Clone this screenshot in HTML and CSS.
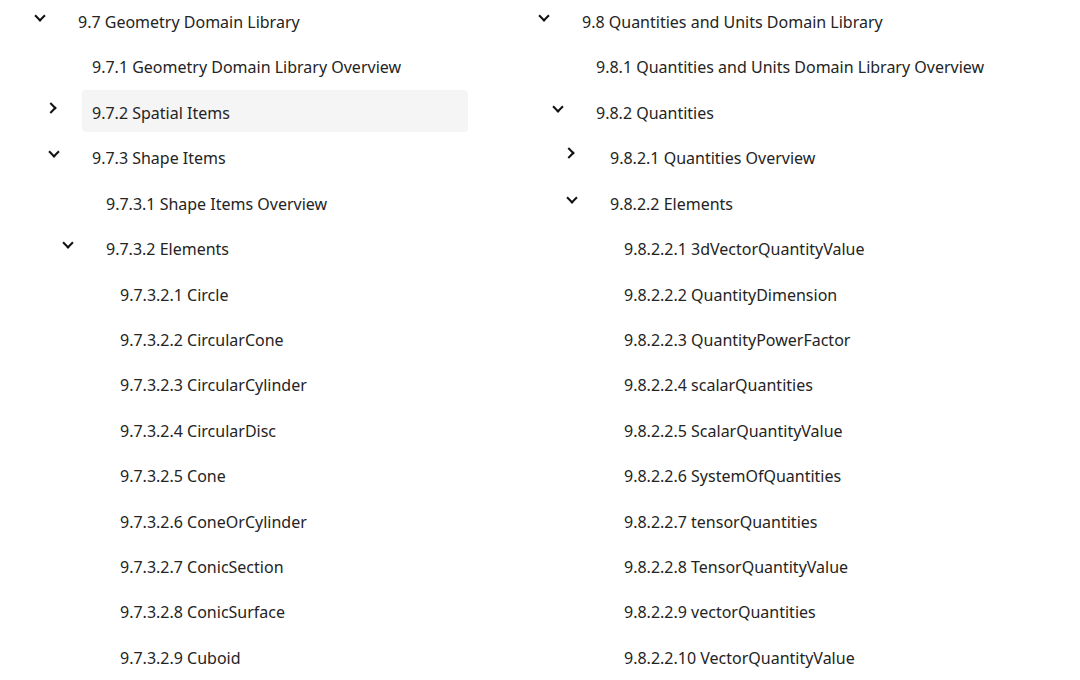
FILE: index.html
```html
<!DOCTYPE html>
<html lang="en">
<head>
    <meta charset="UTF-8">
    <meta name="viewport" content="width=device-width, initial-scale=1.0">
    <title>Table of Contents</title>
    <link rel="stylesheet" href="styles.css">
</head>
<body>
    <main class="toc">
        <ul class="tree">
            <li>
                <div class="row"><span class="toggle open"></span><a class="label" href="#">9.7 Geometry Domain Library</a></div>
                <ul>
                    <li><div class="row"><span class="toggle"></span><a class="label" href="#">9.7.1 Geometry Domain Library Overview</a></div></li>
                    <li><div class="row"><span class="toggle closed"></span><a class="label hover" href="#">9.7.2 Spatial Items</a></div></li>
                    <li>
                        <div class="row"><span class="toggle open"></span><a class="label" href="#">9.7.3 Shape Items</a></div>
                        <ul>
                            <li><div class="row"><span class="toggle"></span><a class="label" href="#">9.7.3.1 Shape Items Overview</a></div></li>
                            <li>
                                <div class="row"><span class="toggle open"></span><a class="label" href="#">9.7.3.2 Elements</a></div>
                                <ul>
                                    <li><div class="row"><span class="toggle"></span><a class="label" href="#">9.7.3.2.1 Circle</a></div></li>
                                    <li><div class="row"><span class="toggle"></span><a class="label" href="#">9.7.3.2.2 CircularCone</a></div></li>
                                    <li><div class="row"><span class="toggle"></span><a class="label" href="#">9.7.3.2.3 CircularCylinder</a></div></li>
                                    <li><div class="row"><span class="toggle"></span><a class="label" href="#">9.7.3.2.4 CircularDisc</a></div></li>
                                    <li><div class="row"><span class="toggle"></span><a class="label" href="#">9.7.3.2.5 Cone</a></div></li>
                                    <li><div class="row"><span class="toggle"></span><a class="label" href="#">9.7.3.2.6 ConeOrCylinder</a></div></li>
                                    <li><div class="row"><span class="toggle"></span><a class="label" href="#">9.7.3.2.7 ConicSection</a></div></li>
                                    <li><div class="row"><span class="toggle"></span><a class="label" href="#">9.7.3.2.8 ConicSurface</a></div></li>
                                    <li><div class="row"><span class="toggle"></span><a class="label" href="#">9.7.3.2.9 Cuboid</a></div></li>
                                </ul>
                            </li>
                        </ul>
                    </li>
                </ul>
            </li>
        </ul>

        <ul class="tree">
            <li>
                <div class="row"><span class="toggle open"></span><a class="label" href="#">9.8 Quantities and Units Domain Library</a></div>
                <ul>
                    <li><div class="row"><span class="toggle"></span><a class="label" href="#">9.8.1 Quantities and Units Domain Library Overview</a></div></li>
                    <li>
                        <div class="row"><span class="toggle open"></span><a class="label" href="#">9.8.2 Quantities</a></div>
                        <ul>
                            <li><div class="row"><span class="toggle closed"></span><a class="label" href="#">9.8.2.1 Quantities Overview</a></div></li>
                            <li>
                                <div class="row"><span class="toggle open"></span><a class="label" href="#">9.8.2.2 Elements</a></div>
                                <ul>
                                    <li><div class="row"><span class="toggle"></span><a class="label" href="#">9.8.2.2.1 3dVectorQuantityValue</a></div></li>
                                    <li><div class="row"><span class="toggle"></span><a class="label" href="#">9.8.2.2.2 QuantityDimension</a></div></li>
                                    <li><div class="row"><span class="toggle"></span><a class="label" href="#">9.8.2.2.3 QuantityPowerFactor</a></div></li>
                                    <li><div class="row"><span class="toggle"></span><a class="label" href="#">9.8.2.2.4 scalarQuantities</a></div></li>
                                    <li><div class="row"><span class="toggle"></span><a class="label" href="#">9.8.2.2.5 ScalarQuantityValue</a></div></li>
                                    <li><div class="row"><span class="toggle"></span><a class="label" href="#">9.8.2.2.6 SystemOfQuantities</a></div></li>
                                    <li><div class="row"><span class="toggle"></span><a class="label" href="#">9.8.2.2.7 tensorQuantities</a></div></li>
                                    <li><div class="row"><span class="toggle"></span><a class="label" href="#">9.8.2.2.8 TensorQuantityValue</a></div></li>
                                    <li><div class="row"><span class="toggle"></span><a class="label" href="#">9.8.2.2.9 vectorQuantities</a></div></li>
                                    <li><div class="row"><span class="toggle"></span><a class="label" href="#">9.8.2.2.10 VectorQuantityValue</a></div></li>
                                </ul>
                            </li>
                        </ul>
                    </li>
                </ul>
            </li>
        </ul>
    </main>
</body>
</html>
```

FILE: styles.css
```css
body {
    font-family: "Noto Sans", "Open Sans", sans-serif;
    margin: 0;
    padding: 0;
    background-color: #fff;
    color: #242424;
    overflow: hidden;
}
.toc {
    display: grid;
    grid-template-columns: 504px 504px;
    margin-top: -1px;
}
.tree, .tree ul {
    list-style: none;
    margin: 0;
    padding: 0;
}
.tree {
    padding: 0 36px 0 12px;
}
.tree ul {
    padding-left: 14px;
}
.row {
    display: flex;
    align-items: center;
    height: 42px;
    margin-bottom: 3.43px;
}
.toggle {
    flex: 0 0 56px;
    height: 42px;
    display: flex;
    align-items: center;
    justify-content: center;
    padding-bottom: 6px;
    box-sizing: border-box;
}
.toggle.open::before,
.toggle.closed::before {
    content: "";
    width: 6px;
    height: 6px;
    border-right: 2.5px solid #111;
    border-bottom: 2.5px solid #111;
}
.toggle.open::before {
    transform: rotate(45deg);
    margin-top: -2px;
}
.toggle.closed::before {
    transform: rotate(-45deg);
    margin-left: -6px;
}
.label {
    flex: 1;
    height: 42px;
    line-height: 46px;
    padding: 0 10px;
    border-radius: 4px;
    color: #242424;
    text-decoration: none;
    font-size: 16px;
    white-space: nowrap;
}
.label.hover {
    background-color: #f5f5f5;
}
```
